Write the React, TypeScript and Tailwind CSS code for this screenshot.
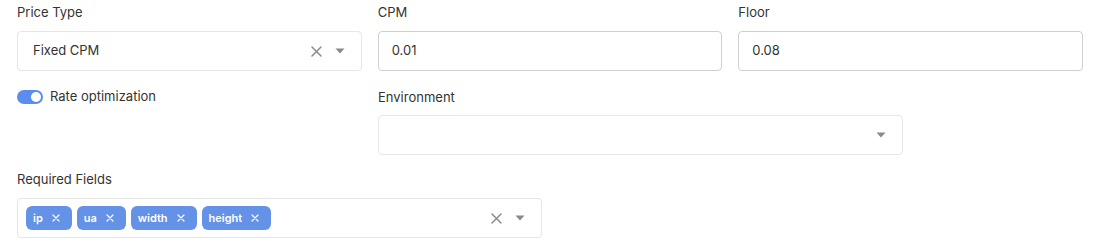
import React from 'react';

// Placement settings form: price type, rates, environment and required fields.

const font = { fontFamily: 'Inter, "Noto Sans", sans-serif' };

function Caret() {
  return (
    <svg width="10" height="6" viewBox="0 0 10 6" className="shrink-0">
      <path d="M0.5 0.5h9L5 5.5z" fill="#8a8a8a" />
    </svg>
  );
}

function Clear() {
  return (
    <svg width="11" height="11" viewBox="0 0 11 11" className="shrink-0">
      <path d="M1 1l9 9M10 1l-9 9" stroke="#8c8c8c" strokeWidth="1.5" strokeLinecap="round" />
    </svg>
  );
}

function Label({ children }: { children: React.ReactNode }) {
  return <div className="text-[13px] leading-5 text-[#333]">{children}</div>;
}

function SelectBox({ children, clearable }: { children?: React.ReactNode; clearable?: boolean }) {
  return (
    <div className="flex h-10 items-center rounded-[4px] border border-[#e6e6e6] bg-white pr-[16px]">
      <div className="flex flex-1 items-center">{children}</div>
      {clearable && (
        <span className="mr-[13px] flex">
          <Clear />
        </span>
      )}
      <Caret />
    </div>
  );
}

function Chip({ text }: { text: string }) {
  return (
    <span className="flex h-6 items-center gap-[9px] rounded-[6px] bg-[#6492e6] pl-[7px] pr-[12px] text-[11px] font-semibold text-white">
      {text}
      <svg width="8" height="8" viewBox="0 0 8 8">
        <path d="M1 1l6 6M7 1l-6 6" stroke="#fff" strokeWidth="1.2" strokeLinecap="round" />
      </svg>
    </span>
  );
}

export default function App() {
  return (
    <div className="h-[248px] w-[1100px] bg-white px-[17px] pt-[2px]" style={font}>
      <div className="grid grid-cols-3 gap-x-4">
        <div>
          <Label>Price Type</Label>
          <div className="mt-[9px]">
            <SelectBox clearable>
              <span className="pl-[15px] text-[13px] text-[#333]">Fixed CPM</span>
            </SelectBox>
          </div>
        </div>
        <div>
          <Label>CPM</Label>
          <div className="mt-[9px] flex h-10 items-center rounded-[4px] border border-[#cfcfcf] px-[13px] text-[13px] text-[#333]">
            0.01
          </div>
        </div>
        <div>
          <Label>Floor</Label>
          <div className="mt-[9px] flex h-10 items-center rounded-[4px] border border-[#cfcfcf] px-[13px] text-[13px] text-[#333]">
            0.08
          </div>
        </div>
      </div>

      <div className="mt-4 flex gap-4">
        <div className="flex w-[345px] items-start">
          <div className="flex h-5 items-center gap-[7px]">
            <span className="flex h-[14px] w-[26px] items-center justify-end rounded-full bg-[#5b8def] pr-[2px]">
              <span className="h-[10px] w-[10px] rounded-full bg-white" />
            </span>
            <span className="text-[13px] text-[#333]">Rate optimization</span>
          </div>
        </div>
        <div className="w-[525px]">
          <Label>Environment</Label>
          <div className="mt-2">
            <SelectBox />
          </div>
        </div>
      </div>

      <div className="mt-[14px] w-[525px]">
        <Label>Required Fields</Label>
        <div className="mt-[9px]">
          <SelectBox clearable>
            <div className="flex gap-[5px] pl-[8px]">
              <Chip text="ip" />
              <Chip text="ua" />
              <Chip text="width" />
              <Chip text="height" />
            </div>
          </SelectBox>
        </div>
      </div>
    </div>
  );
}
